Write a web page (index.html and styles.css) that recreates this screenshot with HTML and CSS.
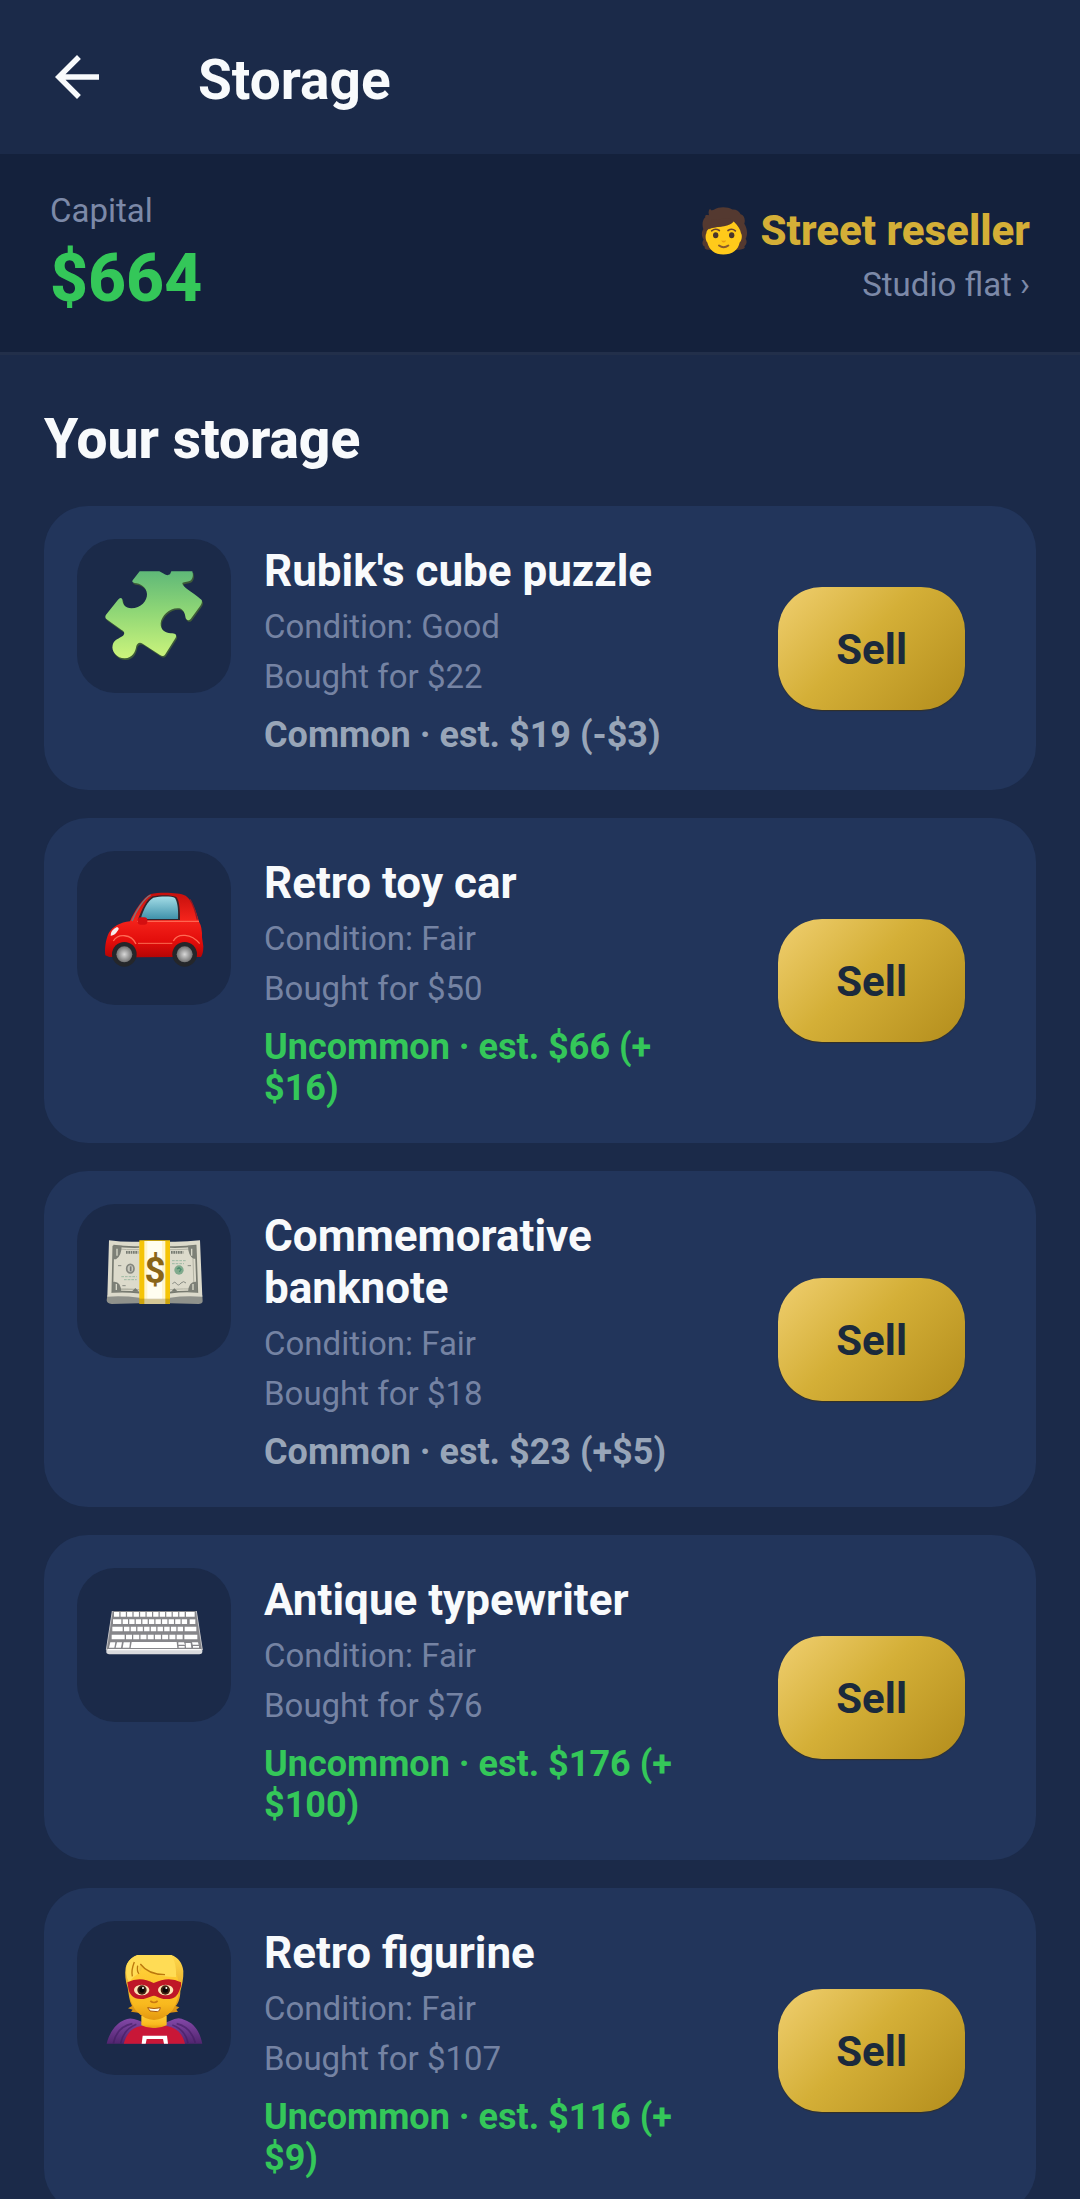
FILE: index.html
```html
<!DOCTYPE html>
<html lang="en">
<head>
    <meta charset="UTF-8">
    <meta name="viewport" content="width=device-width, initial-scale=1.0">
    <title>Storage</title>
    <link rel="stylesheet" href="styles.css">
</head>
<body>
    <header class="app-bar">
        <button class="back-button" type="button" aria-label="Back">
            <svg viewBox="0 0 24 24" aria-hidden="true"><path fill="currentColor" d="M20 11H7.83l5.59-5.59L12 4l-8 8 8 8 1.41-1.41L7.83 13H20z"/></svg>
        </button>
        <h1 class="app-title">Storage</h1>
    </header>

    <section class="status-bar">
        <div class="capital">
            <span class="label">Capital</span>
            <strong class="amount">$664</strong>
        </div>
        <div class="rank">
            <div class="rank-name">
                <svg class="avatar" viewBox="64 50 141 143" aria-hidden="true">
                    <path fill="#543930" d="M88 74C85 64 88 57 92 55C93 61 99 60 104 57C118 48 145 49 158 57C169 56 178 61 183 71C193 73 198 86 194 100C204 116 204 133 198 145C203 153 201 161 194 168C198 171 194 177 180 178L85 178C76 177 73 173 76 169C67 164 66 155 72 147C65 137 65 125 71 116C66 102 69 86 77 80C75 74 80 72 88 74Z"/>
                    <path fill="#ffca1a" d="M80 128C76 136 78 150 83 156C88 178 105 192 131 192C158 192 176 178 180 156C186 150 189 136 184 128C182 116 175 106 162 93C151 108 119 109 94 112C85 115 80 122 80 128Z"/>
                    <path fill="#543930" d="M88 116C106 107 135 111 157 94L150 83L96 88Z"/>
                    <ellipse cx="108" cy="134" rx="8" ry="9" fill="#49352b"/>
                    <ellipse cx="156" cy="134" rx="8" ry="9" fill="#49352b"/>
                    <path d="M96 121Q107 112 119 120M145 120Q157 112 167 121" fill="none" stroke="#6b4632" stroke-width="5" stroke-linecap="round"/>
                    <path fill="#e89f12" d="M125 149Q132 152 139 149Q138 156 132 156Q126 156 125 149Z"/>
                    <path d="M118 165Q132 175 146 165" fill="none" stroke="#8a5a2c" stroke-width="6" stroke-linecap="round"/>
                </svg>
                <span>Street reseller</span>
            </div>
            <a class="label home-link" href="#home">Studio flat ›</a>
        </div>
    </section>

    <main class="storage">
        <h2 class="section-title">Your storage</h2>

        <article class="card">
            <div class="thumb">
                <svg viewBox="-39 -34 462 462" aria-hidden="true">
                    <defs>
                        <linearGradient id="puzzle" x1="0" y1="0" x2="0" y2="1">
                            <stop offset="0" stop-color="#5fb878"/>
                            <stop offset="0.45" stop-color="#8ed676"/>
                            <stop offset="1" stop-color="#ccf47c"/>
                        </linearGradient>
                    </defs>
                    <path fill="#3d5a38" transform="translate(3 5)" d="M149 63H208L219 69Q230 78 240 72L244 63H307Q312 80 303 90C291 97 278 94 277 99C278 112 303 121 335 149Q338 155 331 166L302 206Q293 214 287 204C285 189 281 178 268 174C242 170 214 195 212 219C211 240 227 248 242 249C255 249 262 252 257 262L225 313Q220 320 210 314L158 280C148 274 142 279 139 287C136 305 128 323 104 324C81 324 63 303 68 284C72 267 89 264 98 257C106 250 103 243 95 239L50 207Q43 201 48 193L84 148Q92 139 97 147C98 163 106 174 124 174C153 174 172 151 171 131C170 110 150 98 134 98Q124 96 128 90Z"/>
                    <path fill="url(#puzzle)" d="M149 63H208L219 69Q230 78 240 72L244 63H307Q312 80 303 90C291 97 278 94 277 99C278 112 303 121 335 149Q338 155 331 166L302 206Q293 214 287 204C285 189 281 178 268 174C242 170 214 195 212 219C211 240 227 248 242 249C255 249 262 252 257 262L225 313Q220 320 210 314L158 280C148 274 142 279 139 287C136 305 128 323 104 324C81 324 63 303 68 284C72 267 89 264 98 257C106 250 103 243 95 239L50 207Q43 201 48 193L84 148Q92 139 97 147C98 163 106 174 124 174C153 174 172 151 171 131C170 110 150 98 134 98Q124 96 128 90Z"/>
                </svg>
            </div>
            <div class="info">
                <h3 class="item-name">Rubik's cube puzzle</h3>
                <p class="detail">Condition: Good</p>
                <p class="detail">Bought for $22</p>
                <p class="estimate">Common · est. $19 (-$3)</p>
            </div>
            <button class="sell-button" type="button">Sell</button>
        </article>

        <article class="card">
            <div class="thumb">
                <svg viewBox="21 32 462 462" aria-hidden="true">
                    <defs>
                        <linearGradient id="paint" x1="0" y1="0" x2="0" y2="1">
                            <stop offset="0" stop-color="#c5100d"/>
                            <stop offset="0.42" stop-color="#f4231b"/>
                            <stop offset="0.75" stop-color="#e30d0b"/>
                            <stop offset="1" stop-color="#b40505"/>
                        </linearGradient>
                        <linearGradient id="glass" x1="0" y1="0" x2="0" y2="1">
                            <stop offset="0" stop-color="#a3dce6"/>
                            <stop offset="1" stop-color="#3f92ab"/>
                        </linearGradient>
                        <radialGradient id="hub">
                            <stop offset="0" stop-color="#d7d7d7"/>
                            <stop offset="1" stop-color="#737373"/>
                        </radialGradient>
                    </defs>
                    <path fill="url(#paint)" d="M106 345C104 325 106 302 116 279C128 258 151 246 180 243C194 212 218 172 242 161C270 155 326 156 347 166C366 178 380 216 387 244Q397 260 396 291L400 318Q400 340 393 350H306L202 351L118 350Z"/>
                    <path fill="#35242b" d="M203 240C216 205 230 177 248 168C270 163 305 163 319 170C329 181 330 215 330 239Z"/>
                    <path fill="url(#glass)" d="M213 232C221 207 233 181 250 172C270 168 305 167 315 173C324 187 325 214 324 236H232Z"/>
                    <path d="M186 242C198 211 222 174 242 164" fill="none" stroke="#78777d" stroke-width="4"/>
                    <path d="M360 177Q374 200 382 238" fill="none" stroke="#8d1a25" stroke-width="4"/>
                    <path d="M201 243H387" stroke="#ff6550" stroke-width="4"/>
                    <path d="M204 309H307" stroke="#fa6b51" stroke-width="3"/>
                    <path d="M130 302C144 279 184 280 198 311M310 302C324 277 364 280 389 310" fill="none" stroke="#ff6a54" stroke-width="4"/>
                    <rect x="203" y="231" width="29" height="22" rx="9" fill="#d40e10"/>
                    <path fill="#f6eceb" d="M122 286Q121 270 141 260Q151 263 142 273Q133 287 122 286Z"/>
                    <circle cx="163" cy="342" r="37" fill="#24262a"/>
                    <circle cx="344" cy="342" r="37" fill="#24262a"/>
                    <circle cx="163" cy="342" r="24" fill="url(#hub)"/>
                    <circle cx="344" cy="342" r="24" fill="url(#hub)"/>
                </svg>
            </div>
            <div class="info">
                <h3 class="item-name">Retro toy car</h3>
                <p class="detail">Condition: Fair</p>
                <p class="detail">Bought for $50</p>
                <p class="estimate uncommon">Uncommon · est. $66 (+<wbr>$16)</p>
            </div>
            <button class="sell-button" type="button">Sell</button>
        </article>

        <article class="card">
            <div class="thumb">
                <svg viewBox="21 26 462 462" aria-hidden="true">
                    <path fill="#8f918b" d="M112 300L397 300L398 318Q397 326 385 326L300 324H208L125 326Q110 324 110 315Z"/>
                    <path fill="#dcdacb" d="M117 135Q163 141 208 139H300Q346 140 390 135L397 304Q345 300 300 307H208Q160 301 112 304Z"/>
                    <path d="M130 151Q165 156 208 155M300 155Q345 156 377 151L382 290Q345 286 300 292M208 292Q165 287 127 290L130 151" fill="none" stroke="#777a70" stroke-width="5"/>
                    <path d="M140 160Q165 164 208 163M300 163Q344 163 368 160L372 282Q345 279 300 283M208 283Q165 279 137 282Z" fill="none" stroke="#b3b3a5" stroke-width="3"/>
                    <g fill="#7d8077">
                        <path d="M130 151h25q0 30-17 41h-9zM377 151h-23q0 30 17 39h8zM127 290v-30q25-6 27 30zM382 290v-30q-25-6-28 30z"/>
                    </g>
                    <g fill="none" stroke="#d8d8c9" stroke-width="4">
                        <path d="M141 160V181M365 160V181M139 266V284M369 266V284"/>
                    </g>
                    <path d="M168 171H205M303 171H340" stroke="#777b73" stroke-width="8" stroke-dasharray="5 2"/>
                    <ellipse cx="181" cy="220" rx="11" ry="13" fill="#c8c9bd" stroke="#85877f" stroke-width="5"/>
                    <path d="M182 213V228" stroke="#777" stroke-width="5"/>
                    <circle cx="327" cy="224" r="14" fill="#80aa8d"/>
                    <path d="M321 221L327 217L333 222L328 230" stroke="#4d8e70" stroke-width="4" fill="none"/>
                    <path d="M154 244H200M162 253H200M306 196H348M306 205H342" stroke="#9dbba4" stroke-width="3" stroke-dasharray="8 3"/>
                    <path d="M144 211H154M353 211H363M157 271H167M307 265q8-9 13 0t13-2q8-8 15 0" fill="none" stroke="#888b83" stroke-width="3"/>
                    <path d="M185 289L196 278L207 289M303 289L313 279L324 289" fill="#777a70"/>
                    <path fill="#f5c407" d="M208 135H300V326H208Z"/>
                    <path fill="#fff5cb" d="M223 137H286V326H223Z"/>
                    <path fill="#fffdf0" d="M232 137H276V312H232Z"/>
                    <path fill="#6f5919" opacity=".3" d="M208 310H300V326H208Z"/>
                    <text class="bill-sign" x="255" y="264" text-anchor="middle">$</text>
                </svg>
            </div>
            <div class="info">
                <h3 class="item-name">Commemorative banknote</h3>
                <p class="detail">Condition: Fair</p>
                <p class="detail">Bought for $18</p>
                <p class="estimate">Common · est. $23 (+$5)</p>
            </div>
            <button class="sell-button" type="button">Sell</button>
        </article>

        <article class="card">
            <div class="thumb">
                <svg viewBox="21 24 462 462" aria-hidden="true">
                    <path fill="#d9dadd" d="M109 267L397 267V277Q396 283 388 283H118Q109 282 109 276Z"/>
                    <path fill="#86868a" d="M127 153H379L397 268H109Z"/>
                    <path d="M109 270L127 153M379 153L397 270" stroke="#c2c2c6" stroke-width="3"/>
                    <!-- key rows, top to bottom -->
                    <g fill="none" stroke="#fff" stroke-width="14">
                        <path d="M132 163H344" stroke-dasharray="16 3.6"/>
                        <path d="M348 163H374M129 185H154M127 207H158M125 231H164"/>
                        <path d="M158 185H355" stroke-dasharray="16 3.7"/>
                        <path d="M359 185H376"/>
                        <path d="M162 207H340" stroke-dasharray="16.3 3.8"/>
                        <path d="M344 207H379M343 231H382"/>
                        <path d="M168 231H339" stroke-dasharray="18 3.7"/>
                    </g>
                    <g fill="#fff">
                        <path d="M121 247H136L133 263H117ZM141 247H156L153 263H137ZM161 247H180L178 263H158ZM185 246H320L322 264H182ZM325 247H342L345 254H325ZM347 249H362L364 263H348ZM366 247H384L386 254H368ZM326 258H344V263H326ZM369 258H387V263H369Z"/>
                    </g>
                    <path d="M113 269H394" stroke="#fafafa" stroke-width="4"/>
                </svg>
            </div>
            <div class="info">
                <h3 class="item-name">Antique typewriter</h3>
                <p class="detail">Condition: Fair</p>
                <p class="detail">Bought for $76</p>
                <p class="estimate uncommon">Uncommon · est. $176 (+<wbr>$100)</p>
            </div>
            <button class="sell-button" type="button">Sell</button>
        </article>

        <article class="card">
            <div class="thumb">
                <svg viewBox="21 32 462 462" aria-hidden="true">
                    <defs>
                        <linearGradient id="hair" x1="0" y1="0" x2="0" y2="1">
                            <stop offset="0" stop-color="#ffd94d"/>
                            <stop offset="1" stop-color="#d99012"/>
                        </linearGradient>
                        <linearGradient id="skin" x1="0" y1="0" x2="0" y2="1">
                            <stop offset="0" stop-color="#ffcf38"/>
                            <stop offset="0.7" stop-color="#f9b91e"/>
                            <stop offset="1" stop-color="#e3970f"/>
                        </linearGradient>
                        <linearGradient id="cape" x1="0" y1="0" x2="0" y2="1">
                            <stop offset="0" stop-color="#8448a8"/>
                            <stop offset="1" stop-color="#51256f"/>
                        </linearGradient>
                    </defs>
                    <path fill="url(#cape)" d="M110 400C118 365 140 338 163 329Q180 319 204 330L253 350L301 331Q325 317 344 329C374 338 391 369 397 400Z"/>
                    <path d="M130 399Q140 350 187 340M152 399Q160 358 199 342M320 340Q362 350 376 397M307 344Q346 358 354 398" fill="none" stroke="#3f1c61" stroke-width="5" opacity=".6"/>
                    <path fill="#c91737" d="M161 400C170 370 184 352 214 347H291C323 353 338 372 345 400Z"/>
                    <path fill="url(#hair)" d="M203 134H304C325 142 337 158 340 182C341 205 336 225 331 243C331 262 325 280 317 287L328 291L319 298L324 304L300 307H205L183 304L188 298L174 294L186 287C177 270 176 250 173 232C166 212 164 190 167 172C172 153 186 139 203 134Z"/>
                    <path fill="url(#skin)" d="M214 316H290V345Q271 354 253 353Q231 354 214 345Z"/>
                    <path fill="url(#skin)" d="M176 199Q207 196 218 171Q248 202 321 195L329 230C326 262 317 290 302 306Q280 328 252 329Q223 328 203 306C187 290 177 262 176 233Z"/>
                    <path fill="#ffdc55" d="M203 134H304C315 149 320 178 318 200C280 201 230 191 211 161Q205 178 210 187Q191 196 177 217Q164 193 171 161Q182 141 203 134Z"/>
                    <path d="M211 161C229 185 257 193 285 193M193 155Q183 180 187 198M203 166Q200 184 207 190" fill="none" stroke="#bb770c" stroke-width="4"/>
                    <path fill="#bf1727" d="M172 216Q211 196 251 218Q296 196 333 216Q335 229 329 238C323 257 311 268 287 266C268 266 263 257 252 256C239 257 233 266 214 266C190 267 179 251 176 239Z"/>
                    <ellipse cx="215" cy="239" rx="23" ry="16" fill="#fbe3b4"/>
                    <ellipse cx="287" cy="239" rx="23" ry="16" fill="#fbe3b4"/>
                    <circle cx="216" cy="239" r="14" fill="#432111"/>
                    <circle cx="286" cy="239" r="14" fill="#432111"/>
                    <circle cx="216" cy="239" r="8" fill="#0c0604"/>
                    <circle cx="286" cy="239" r="8" fill="#0c0604"/>
                    <circle cx="219" cy="233" r="3" fill="#fff"/>
                    <circle cx="289" cy="233" r="3" fill="#fff"/>
                    <path d="M241 272Q252 281 263 272" fill="none" stroke="#c97912" stroke-width="5"/>
                    <path fill="#fff8e5" stroke="#a8580d" stroke-width="3" d="M233 292Q252 297 271 292Q270 303 262 304L240 302Z"/>
                    <path fill="#fff" d="M218 376H291L294 400H282L279 386H230L227 400H215Z"/>
                </svg>
            </div>
            <div class="info">
                <h3 class="item-name">Retro figurine</h3>
                <p class="detail">Condition: Fair</p>
                <p class="detail">Bought for $107</p>
                <p class="estimate uncommon">Uncommon · est. $116 (+<wbr>$9)</p>
            </div>
            <button class="sell-button" type="button">Sell</button>
        </article>
    </main>
</body>
</html>
```

FILE: styles.css
```css
* {
    box-sizing: border-box;
}

body {
    margin: 0;
    display: flex;
    flex-direction: column;
    height: 100vh;
    background: #1b2a49;
    color: #f8fafc;
    font-family: 'Roboto', sans-serif;
}

h1, h2, h3, p {
    margin: 0;
}

button {
    border: none;
    font-family: inherit;
    cursor: pointer;
}

.app-bar {
    flex: none;
    display: flex;
    align-items: center;
    gap: 88px;
    padding: 44px;
}

.back-button {
    width: 66px;
    height: 66px;
    padding: 0;
    background: none;
    color: #f8fafc;
}

.back-button svg {
    display: block;
    width: 100%;
}

.app-title {
    padding-top: 6px;
    font-size: 55px;
    line-height: 60px;
    font-weight: 700;
}

.status-bar {
    flex: none;
    display: flex;
    justify-content: space-between;
    align-items: center;
    padding: 37px 50px 35px;
    background: #14213c;
    border-bottom: 3px solid #222f4a;
}

.capital,
.rank {
    display: flex;
    flex-direction: column;
    gap: 10px;
}

.rank {
    align-items: flex-end;
    padding-top: 3px;
}

.label {
    color: #7c89a8;
    font-size: 33px;
    line-height: 39px;
}

.amount {
    color: #34c759;
    font-size: 66px;
    line-height: 77px;
    font-weight: 800;
}

.rank-name {
    display: flex;
    align-items: center;
    gap: 12px;
    color: #d4af37;
    font-size: 42px;
    line-height: 48px;
    font-weight: 800;
}

.avatar {
    width: 47px;
    height: 48px;
}

.home-link {
    text-decoration: none;
}

.storage {
    flex: 1;
    min-height: 0;
    overflow-y: auto;
    scrollbar-width: none;
    padding: 52px 44px;
    display: flex;
    flex-direction: column;
    gap: 28px;
}

.section-title {
    padding-bottom: 7px;
    font-size: 55px;
    line-height: 64px;
    font-weight: 800;
}

.card {
    flex: none;
    display: flex;
    align-items: center;
    padding: 33px;
    background: #22355b;
    border-radius: 44px;
}

.thumb {
    flex: none;
    align-self: flex-start;
    width: 154px;
    height: 154px;
    background: #1b2a49;
    border-radius: 38px;
}

.thumb svg {
    display: block;
    width: 100%;
    height: 100%;
}

.bill-sign {
    fill: #8a6518;
    font-size: 110px;
    font-weight: 700;
}

.info {
    flex: 1;
    min-width: 0;
    padding: 6px 0 1px;
    margin: 0 72px 0 33px;
}

.item-name {
    font-size: 44px;
    line-height: 52px;
    font-weight: 700;
}

.detail {
    margin-top: 11px;
    color: #7583a3;
    font-size: 33px;
    line-height: 39px;
}

.item-name + .detail {
    margin-top: 10px;
}

.estimate {
    margin-top: 19px;
    color: #98a5b8;
    font-size: 36px;
    line-height: 41px;
    font-weight: 700;
}

.estimate.uncommon {
    color: #34c759;
}

.sell-button {
    flex: none;
    margin-right: 38px;
    padding: 39px 58px 36px;
    background: linear-gradient(135deg, #f0cf70 0%, #d4af37 45%, #b38d1c 100%);
    border-radius: 44px;
    box-shadow: 0 1px 1px rgba(56, 48, 24, 0.8);
    color: #1b2a3c;
    font-size: 42px;
    line-height: 48px;
    font-weight: 700;
}
```
